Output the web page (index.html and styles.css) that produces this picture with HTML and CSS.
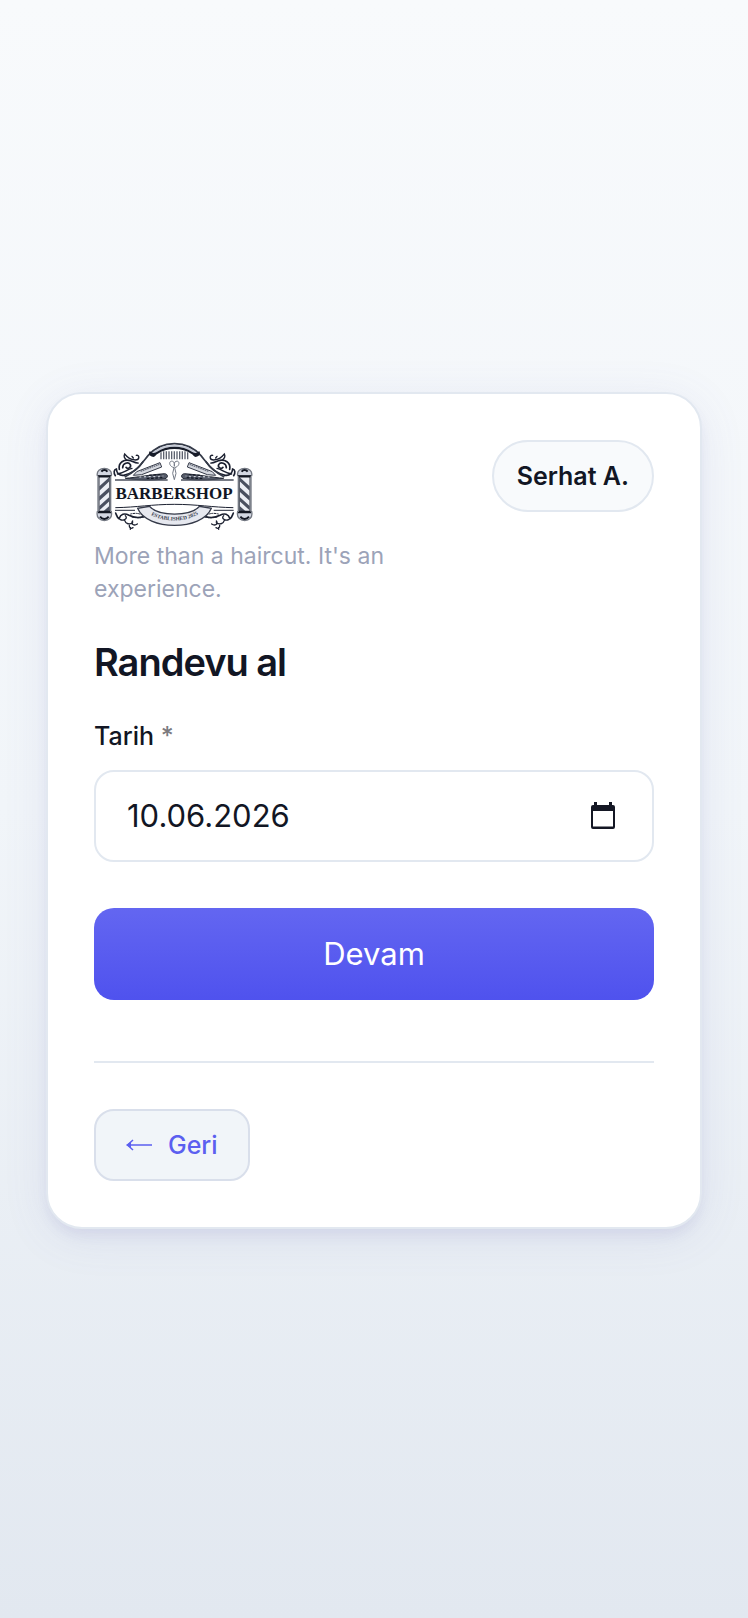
FILE: index.html
```html
<!DOCTYPE html>
<html lang="tr">
<head>
<meta charset="utf-8">
<meta name="viewport" content="width=device-width, initial-scale=1">
<title>Randevu al</title>
<link rel="stylesheet" href="styles.css">
</head>
<body>
<main class="card">
  <header class="header">
    <div class="brand">
      <svg class="logo" viewBox="12 15 486 270" role="img" aria-label="Barbershop">
        <defs>
          <g id="pole">
            <rect x="27" y="112" width="32" height="128" fill="#eceef4" stroke="#60656f" stroke-width="4"/>
            <path d="M28 148l30-27v12l-30 28zM28 178l30-27v13l-30 27zM28 207l30-27v13l-30 27zM30 232l28-25v13l-18 16z" fill="#4a5060"/>
            <path d="M22 116c-6-29 48-29 42 0zM22 224c-8 36 50 36 42 0z" fill="#d3d7e2" stroke="#747983" stroke-width="4"/>
            <path d="M24 118h39M24 225h39" stroke="#141823" stroke-width="7"/>
            <path d="M34 104c5-7 14-7 18 0M30 239c7 9 19 9 26 0" fill="none" stroke="#141823" stroke-width="6"/>
            <path d="M24 118v107M62 118v107" stroke="#747983" stroke-width="4"/>
          </g>
          <g id="scrolls" fill="none" stroke="#1b2030" stroke-width="5" stroke-linecap="round">
            <path d="M76 116c-6-8-4-19 3-20 1 12 9 21 22 19 22-5 44-18 58-41"/>
            <path d="M88 97c-4-20 14-32 34-26 9 3 13 8 22 7M98 92c0-14 17-19 23-9 4 9-9 14-13 8"/>
            <path d="M109 68c-8-6-7-13-5-17 9 10 15 17 32 18 14 0 13-16 3-14M82 111c20-3 29-14 44-17M126 58l4 5" stroke-width="4"/>
            <path d="M77 228c3 7 4 14 10 17 5-14 16-18 30-10 23 12 48 5 57-3"/>
            <path d="M90 247c11 7 25-4 16-11M104 250c3 11 15 14 24 7M128 252c-7 9 4 16 14 9M118 265c-1 9 5 11 11 7M121 271v6" stroke-width="4"/>
            <path d="M122 231c16-4 29-2 44 8M126 240c14 4 27 2 39 0" stroke-width="3" stroke-dasharray="4 4"/>
          </g>
          <g id="razor">
            <path d="M140 104l70-27 5 13-60 23-25 2z" fill="#d5d8df" stroke="#353a48" stroke-width="3"/>
            <path d="M152 103l56-21" stroke="#6a6f7c" stroke-width="4" stroke-dasharray="5 2"/>
            <path d="M106 124c35-3 68-10 118-14 12 2 10 13 1 15-35 6-75 5-119-1z" fill="#555b69" stroke="#242936" stroke-width="3"/>
            <path d="M148 120l72-3" stroke="#e3e6ed" stroke-width="3" stroke-dasharray="6 8"/>
            <path d="M177 115l36-2M170 125l47-3" stroke="#131824" stroke-width="4" stroke-dasharray="8 5"/>
          </g>
        </defs>
        <use href="#pole"/>
        <use href="#pole" transform="translate(507 0) scale(-1 1)"/>
        <use href="#scrolls"/>
        <use href="#scrolls" transform="translate(507 0) scale(-1 1)"/>
        <path d="M104 120c38-19 52-43 70-64 42-48 117-48 159 0 18 21 32 45 70 64" fill="none" stroke="#343a48" stroke-width="5"/>
        <path d="M183 56c36-40 105-40 141 0" fill="none" stroke="#c5cad6" stroke-width="6"/>
        <path d="M190 60c-13-3-16-12-10-18 5 7 12 8 20 3 30-21 77-21 107 0 8 5 15 4 20-3 6 6 3 15-10 18-6-1-7-6-12-9-28-20-75-20-103 0-5 3-6 8-12 9z" fill="#171c29"/>
        <path d="M213 46v21M221 43v24M229 43v24M237 43v24M245 43v24M253 43v24M261 43v24M269 43v24M277 43v24M285 43v24M293 46v21" stroke="#5d626f" stroke-width="4"/>
        <use href="#razor"/>
        <use href="#razor" transform="translate(507 0) scale(-1 1)"/>
        <path d="M252 92c-18-5-15-23-4-19 7 2 4 10 5 15 1-5-2-13 5-15 11-4 14 14-4 19l4 17-5 19-5-19z" fill="#fff" stroke="#747a86" stroke-width="3"/>
        <path d="M75 129h158M273 129h158M75 220h60M371 220h60" fill="none" stroke="#4b505e" stroke-width="4"/>
        <path d="M76 212c65-1 110-10 177-10s114 9 177 10" fill="none" stroke="#1b2030" stroke-width="3"/>
        <path d="M143 214c27 68 194 68 221 0l-36-6c-26 31-123 31-149 0z" fill="#e6e8ef" stroke="#353a49" stroke-width="4"/>
        <path id="seal-line" d="M172 226c38 33 124 33 163-3" fill="none"/>
        <text class="logo-small"><textPath href="#seal-line" startOffset="50%" text-anchor="middle">ESTABLISHED 2025</textPath></text>
        <text class="logo-word" x="252" y="186" text-anchor="middle">BARBERSHOP</text>
      </svg>
      <p class="tagline">More than a haircut. It's an experience.</p>
    </div>
    <button class="user" type="button">Serhat A.</button>
  </header>
  <h1 class="title">Randevu al</h1>
  <form class="form">
    <label class="label" for="date">Tarih <span class="required">*</span></label>
    <div class="field">
      <input class="date" id="date" type="text" inputmode="numeric" value="10.06.2026" required>
      <button class="picker" type="button" aria-label="Takvimi aç">
        <svg class="calendar" viewBox="0 0 24 27" aria-hidden="true">
          <path fill-rule="evenodd" d="M3 0h3v3h12V0h3v3h1a2 2 0 0 1 2 2v20a2 2 0 0 1-2 2H2a2 2 0 0 1-2-2V5a2 2 0 0 1 2-2h1zM2 9v15.500h20V9z" fill="#141724"/>
        </svg>
      </button>
    </div>
    <button class="submit" type="submit">Devam</button>
  </form>
  <footer class="footer">
    <a class="back" href="#">
      <svg class="arrow" viewBox="0 0 26 12" aria-hidden="true"><path d="M1 6h25M7 1L1.500 6 7 11" fill="none" stroke="currentColor" stroke-width="1.500"/><path d="M0 6l5-3v6z" fill="currentColor"/></svg>
      <span>Geri</span>
    </a>
  </footer>
</main>
</body>
</html>
```
FILE: styles.css
```css
* {
  box-sizing: border-box;
}

body {
  margin: 0;
  min-height: 100vh;
  padding: 48px 46px 46px;
  display: flex;
  align-items: center;
  justify-content: center;
  background: linear-gradient(180deg, #f8fafc 0%, #f1f5f9 50%, #e2e8f0 100%);
  color: #121624;
  font-family: Inter, "Liberation Sans", sans-serif;
}

button,
input {
  font-family: inherit;
  color: inherit;
}

.card {
  width: 100%;
  max-width: 800px;
  padding: 46px;
  border: 2px solid #e2e8f0;
  border-radius: 36px;
  background: #fff;
  box-shadow: 0 8px 12px -2px rgba(99, 102, 180, 0.1), 0 8px 46px rgba(99, 102, 180, 0.1);
}

.header {
  display: flex;
  align-items: flex-start;
  justify-content: space-between;
  gap: 24px;
}

.brand {
  flex: 0 1 320px;
}

.logo {
  display: block;
  width: 162px;
  height: 90px;
  margin-top: 2px;
}

.logo-word {
  font: 700 51px "Liberation Serif", serif;
  fill: #121624;
}

.logo-small {
  font: 700 16px "Liberation Serif", serif;
  fill: #353a49;
}

.tagline {
  margin: 8px 0 0;
  color: #9ca3b8;
  font-size: 23px;
  line-height: 33px;
}

.user {
  height: 72px;
  padding: 0 23px;
  border: 2px solid #e2e8f0;
  border-radius: 36px;
  background: #f8fafc;
  font-size: 25px;
  font-weight: 600;
  white-space: nowrap;
}

.title {
  margin: 32px 0;
  font-size: 38px;
  font-weight: 600;
  line-height: 48px;
  letter-spacing: -1px;
}

.form {
  display: flex;
  flex-direction: column;
}

.label {
  margin-bottom: 16px;
  font-size: 25px;
  font-weight: 500;
  line-height: 36px;
}

.required {
  color: #7b7b7f;
}

.field {
  height: 92px;
  padding: 0 33px 0 31px;
  display: flex;
  align-items: center;
  border: 2px solid #e2e8f0;
  border-radius: 20px;
  background: #fff;
}

.date {
  flex: 1;
  min-width: 0;
  padding: 0;
  border: 0;
  outline: 0;
  background: transparent;
  font-size: 31px;
}

.picker {
  padding: 4px;
  border: 0;
  background: transparent;
}

.calendar {
  display: block;
  width: 24px;
  height: 27px;
}

.submit {
  height: 92px;
  margin-top: 46px;
  border: 0;
  border-radius: 20px;
  background: linear-gradient(180deg, #6366f1, #4f52ee);
  color: #fff;
  font-size: 31px;
  font-weight: 400;
}

.footer {
  margin-top: 61px;
  padding-top: 46px;
  display: flex;
  border-top: 2px solid #e2e8f0;
}

.back {
  height: 72px;
  padding: 0 30px;
  display: flex;
  align-items: center;
  gap: 16px;
  border: 2px solid #d9dfeb;
  border-radius: 20px;
  background: #f1f5f9;
  color: #5b5ff0;
  font-size: 25px;
  font-weight: 500;
  text-decoration: none;
}

.arrow {
  width: 26px;
  height: 12px;
}
```
